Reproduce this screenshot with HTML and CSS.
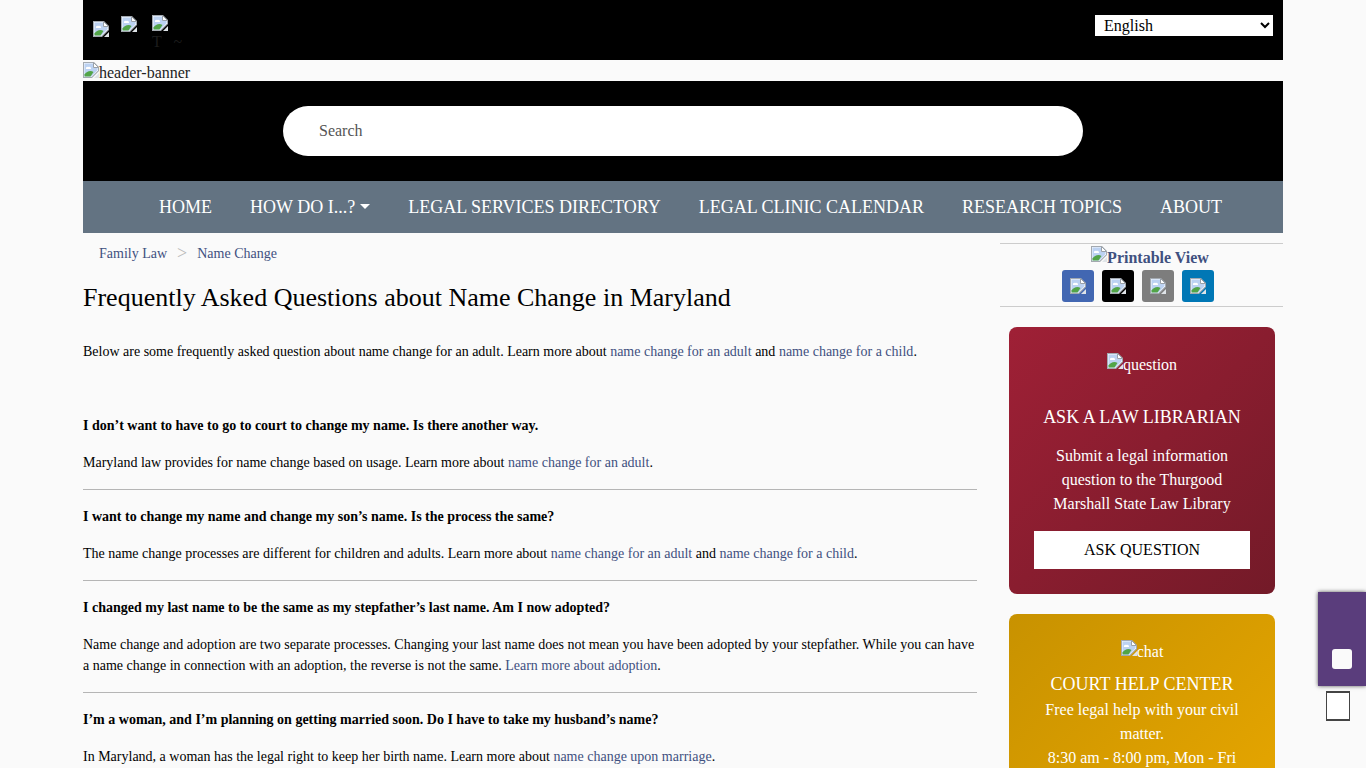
FILE: index.html
```
<!DOCTYPE html>
<html lang="en">
<head>
    <meta charset="UTF-8">
    <meta name="viewport" content="width=device-width, initial-scale=1.0">
    <title>Frequently Asked Questions about Name Change in Maryland</title>
    <link rel="stylesheet" href="styles.css">
</head>
<body>
    <svg class="sprite" aria-hidden="true">
        <symbol id="picture" viewBox="0 0 16 16">
            <path d="M0 0h11l5 5v4l-7 7H0z" fill="#a3a9b0"/>
            <path d="M1 1h9.500L15 5.500V8.500L8.500 15H1z" fill="#f4f8ff"/>
            <path d="M1.500 1.500h9v4h4v2.500l-6 6.500h-7z" fill="#bcd2f2"/>
            <path d="M3 7a1.500 1.500 0 0 1 2-2 2 2 0 0 1 3 2z" fill="#fff"/>
            <path d="M1.500 14.500v-2c2-3 6-4.500 9-2.500l-3 4.500z" fill="#52a447"/>
            <path d="M10.500 0.500l5 5h-5z" fill="#fff" stroke="#9aa1a8"/>
            <path d="M16 11v5h-5z" fill="#dfe4e8"/>
        </symbol>
    </svg>

    <div class="container">
        <header>
            <div class="top-bar">
                <div class="social-links">
                    <a href="#" aria-label="Facebook"><svg class="pic"><use href="#picture"/></svg></a>
                    <a href="#" aria-label="X"><svg class="pic"><use href="#picture"/></svg></a>
                    <a href="#" class="tall"><svg class="pic"><use href="#picture"/></svg><span>T &nbsp; ~</span></a>
                </div>
                <select class="language" aria-label="Language">
                    <option>English</option>
                    <option>Español</option>
                    <option>Français</option>
                </select>
            </div>
            <div class="banner"><svg class="pic"><use href="#picture"/></svg>header-banner</div>
            <form class="search-bar">
                <input type="text" class="search-input" placeholder="Search" aria-label="Search">
            </form>
            <nav class="main-nav">
                <a href="#">HOME</a>
                <a href="#" class="dropdown">HOW DO I...?</a>
                <a href="#">LEGAL SERVICES DIRECTORY</a>
                <a href="#">LEGAL CLINIC CALENDAR</a>
                <a href="#">RESEARCH TOPICS</a>
                <a href="#">ABOUT</a>
            </nav>
        </header>

        <div class="columns">
            <main class="content">
                <div class="breadcrumb">
                    <a href="#">Family Law</a>
                    <span>&gt;</span>
                    <a href="#">Name Change</a>
                </div>
                <h1>Frequently Asked Questions about Name Change in Maryland</h1>
                <p class="intro">Below are some frequently asked question about name change for an adult. Learn more about <a href="#">name change for an adult</a> and <a href="#">name change for a child</a>.</p>

                <section class="faq">
                    <h2>I don’t want to have to go to court to change my name. Is there another way.</h2>
                    <p>Maryland law provides for name change based on usage. Learn more about <a href="#">name change for an adult</a>.</p>
                </section>
                <section class="faq">
                    <h2>I want to change my name and change my son’s name. Is the process the same?</h2>
                    <p>The name change processes are different for children and adults. Learn more about <a href="#">name change for an adult</a> and <a href="#">name change for a child</a>.</p>
                </section>
                <section class="faq">
                    <h2>I changed my last name to be the same as my stepfather’s last name. Am I now adopted?</h2>
                    <p>Name change and adoption are two separate processes. Changing your last name does not mean you have been adopted by your stepfather. While you can have a name change in connection with an adoption, the reverse is not the same. <a href="#">Learn more about adoption</a>.</p>
                </section>
                <section class="faq">
                    <h2>I’m a woman, and I’m planning on getting married soon. Do I have to take my husband’s name?</h2>
                    <p>In Maryland, a woman has the legal right to keep her birth name. Learn more about <a href="#">name change upon marriage</a>.</p>
                </section>
            </main>

            <aside class="sidebar">
                <div class="share">
                    <a href="#" class="print"><svg class="pic"><use href="#picture"/></svg>Printable View</a>
                    <div class="share-buttons">
                        <a href="#" class="facebook" aria-label="Share on Facebook"><svg class="pic"><use href="#picture"/></svg></a>
                        <a href="#" class="twitter" aria-label="Share on X"><svg class="pic"><use href="#picture"/></svg></a>
                        <a href="#" class="email" aria-label="Share by email"><svg class="pic"><use href="#picture"/></svg></a>
                        <a href="#" class="linkedin" aria-label="Share on LinkedIn"><svg class="pic"><use href="#picture"/></svg></a>
                    </div>
                </div>
                <div class="card red">
                    <div class="card-image"><svg class="pic"><use href="#picture"/></svg>question</div>
                    <h3>ASK A LAW LIBRARIAN</h3>
                    <p>Submit a legal information question to the Thurgood Marshall State Law Library</p>
                    <button type="button" class="card-button">ASK QUESTION</button>
                </div>
                <div class="card gold">
                    <div class="card-image"><svg class="pic"><use href="#picture"/></svg>chat</div>
                    <h3>COURT HELP CENTER</h3>
                    <p>Free legal help with your civil matter.<br>8:30 am - 8:00 pm, Mon - Fri</p>
                </div>
            </aside>
        </div>
    </div>

    <div class="floating">
        <button type="button" class="chat-tab" aria-label="Chat"><span></span></button>
        <button type="button" class="small-box" aria-label="Back to top"></button>
    </div>
</body>
</html>
```
FILE: styles.css
```
* {
    box-sizing: border-box;
}
body {
    margin: 0;
    height: 100vh;
    overflow: hidden;
    background-color: #fafafa;
    color: #000;
    font-family: "Liberation Serif", "Times New Roman", serif;
    font-size: 14px;
    line-height: 21px;
}
a {
    color: #3f5080;
    text-decoration: none;
}
.sprite {
    position: absolute;
    width: 0;
    height: 0;
}
.pic {
    width: 16px;
    height: 16px;
    flex: none;
}
.container {
    max-width: 1200px;
    margin: 0 auto;
}

/* header */
.top-bar {
    display: flex;
    justify-content: space-between;
    align-items: flex-start;
    height: 60px;
    padding: 15px 10px;
    background-color: #000;
}
.social-links {
    display: flex;
    gap: 12px;
}
.social-links a {
    display: flex;
    padding-top: 1px;
}
.social-links a:first-child {
    padding-top: 6px;
}
.social-links .tall {
    flex-direction: column;
    margin-left: 3px;
    padding-top: 0;
    font-size: 16px;
    color: #1c1c1c;
}
.language {
    width: 178px;
    height: 21px;
    padding: 0 5px;
    border: none;
    border-radius: 0;
    background-color: #fff;
    color: #000;
    font-family: inherit;
    font-size: 16px;
}
.banner {
    display: flex;
    height: 21px;
    padding-top: 2px;
    font-size: 16px;
    color: #222;
}
.search-bar {
    display: flex;
    justify-content: center;
    padding: 25px;
    background-color: #000;
}
.search-input {
    width: 100%;
    max-width: 800px;
    height: 50px;
    padding: 0 36px;
    border: none;
    border-radius: 25px;
    background-color: #fff;
    font-family: inherit;
    font-size: 16px;
}
.search-input::placeholder {
    color: #555;
}
.main-nav {
    display: flex;
    justify-content: center;
    gap: 38px;
    padding: 14px 0 14px 15px;
    background-color: #637382;
}
.main-nav a {
    color: #fff;
    font-size: 18px;
    line-height: 24px;
}
.dropdown::after {
    content: "";
    display: inline-block;
    margin-left: 5px;
    vertical-align: 4px;
    border-top: 5px solid #fff;
    border-left: 5px solid transparent;
    border-right: 5px solid transparent;
}

/* content */
.columns {
    display: grid;
    grid-template-columns: 1fr 283px;
    gap: 23px;
}
.breadcrumb {
    display: flex;
    gap: 10px;
    padding: 10px 16px;
}
.breadcrumb span {
    color: #bbb;
    font-size: 18px;
}
h1 {
    margin: 8px 0 27px;
    font-size: 26px;
    font-weight: normal;
    line-height: 32px;
}
.content p {
    margin: 0;
}
.content .intro {
    margin-bottom: 53px;
}
.faq {
    margin-bottom: 16px;
    padding-bottom: 16px;
    border-bottom: 1px solid #b5b5b5;
}
.faq h2 {
    margin: 0 0 16px;
    font-size: 14px;
    line-height: 21px;
}

/* sidebar */
.sidebar {
    padding-top: 10px;
}
.share {
    display: flex;
    flex-direction: column;
    height: 64px;
    border-top: 1px solid #ccc;
    border-bottom: 1px solid #ccc;
}
.print {
    display: flex;
    justify-content: center;
    padding: 2px 0 0 17px;
    font-size: 16px;
    font-weight: bold;
    line-height: 24px;
}
.share-buttons {
    display: flex;
    justify-content: center;
    gap: 8px;
    padding-right: 7px;
}
.share-buttons a {
    display: flex;
    width: 32px;
    height: 32px;
    padding: 8px;
    border-radius: 3px;
}
.facebook {
    background-color: #4267b2;
}
.twitter {
    background-color: #000;
}
.email {
    background-color: #7d7d7d;
}
.linkedin {
    background-color: #0077b5;
}
.card {
    margin: 20px 8px 0 9px;
    padding: 26px 25px 25px;
    border-radius: 8px;
    color: #fff;
    font-size: 16px;
    line-height: 24px;
    text-align: center;
}
.red {
    background: linear-gradient(135deg, #9f2036, #731a28);
}
.gold {
    background: linear-gradient(135deg, #c89200, #e5a500);
}
.card-image {
    display: flex;
    justify-content: center;
}
.card h3 {
    margin: 28px 0 15px;
    font-size: 18px;
    font-weight: normal;
    line-height: 24px;
}
.gold h3 {
    margin: 8px 0 2px;
}
.card p {
    margin: 0;
}
.card-button {
    width: 100%;
    height: 38px;
    margin-top: 15px;
    border: none;
    background-color: #fff;
    font-family: inherit;
    font-size: 16px;
}

/* buttons over the page edge */
.floating {
    position: fixed;
    right: 0;
    bottom: 47px;
    display: flex;
    flex-direction: column;
    align-items: center;
    gap: 5px;
}
.chat-tab {
    display: flex;
    justify-content: center;
    align-items: flex-end;
    width: 48px;
    height: 94px;
    padding: 0 0 17px;
    border: none;
    background-color: #5a3d7c;
    box-shadow: 0 0 4px #555;
}
.chat-tab span {
    width: 20px;
    height: 20px;
    border-radius: 3px;
    background-color: #fafafa;
}
.small-box {
    width: 24px;
    height: 30px;
    margin-right: 8px;
    border: 1px solid #444;
    border-width: 2px 1px;
    background-color: #fff;
}
```
